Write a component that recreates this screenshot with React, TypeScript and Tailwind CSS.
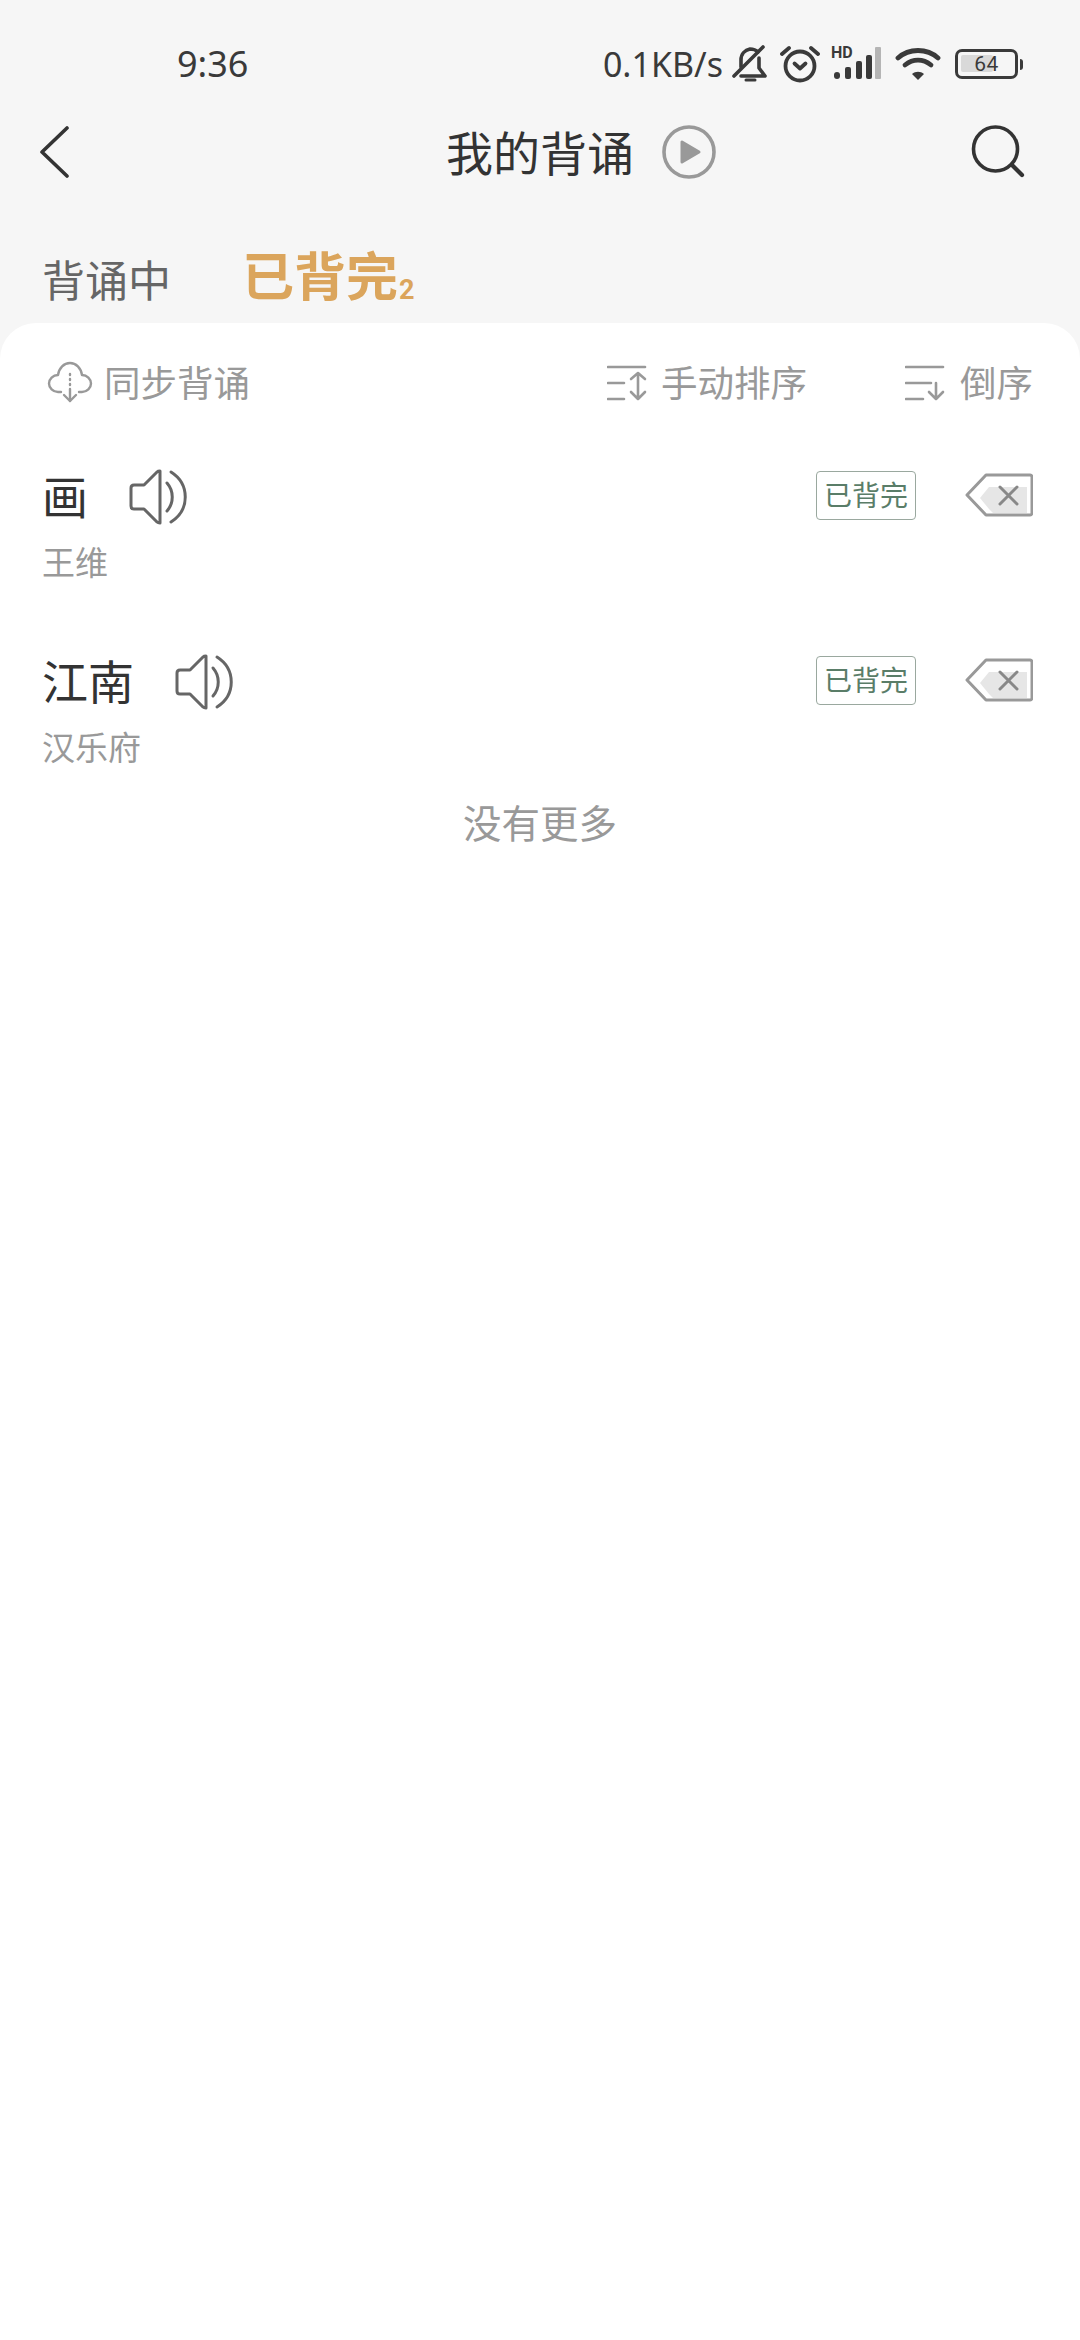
import React from "react";

const CJK = "font-['Noto_Sans_CJK_SC','Noto_Sans',sans-serif]";

function BellOff() {
  return (
    <svg width="36" height="38" viewBox="0 0 36 38" fill="none" stroke="#3a3a3a" strokeWidth="3.6" strokeLinecap="round" strokeLinejoin="round">
      <path d="M9 22V15C9 9 13 5 18 4c3 0 6 1 8 3" />
      <path d="M27 13v10l6 8H9" />
      <path d="M2 31 31 2" />
      <path d="M14 35h9" strokeWidth="3" />
    </svg>
  );
}

function Alarm() {
  return (
    <svg width="40" height="38" viewBox="0 0 40 38" fill="none" stroke="#3a3a3a" strokeWidth="3.8" strokeLinecap="round" strokeLinejoin="round">
      <circle cx="20" cy="21" r="14.500" />
      <path d="M14.500 18.500 20 23.500l5.500-5" />
      <path d="M2 9 9 3M38 9l-7-6" />
    </svg>
  );
}

function Signal() {
  return (
    <div className="relative h-[34px] w-[50px]">
      <span className="absolute left-0 top-[-2px] font-['Roboto',sans-serif] text-[16px] leading-[16px] font-bold text-[#3a3a3a]">HD</span>
      <svg className="absolute left-0 top-0" width="50" height="34" viewBox="0 0 50 34" fill="#3a3a3a">
        <rect x="3" y="25" width="6" height="7" rx="3" />
        <rect x="14" y="20" width="6" height="12" rx="2" />
        <rect x="25" y="14" width="6" height="18" rx="2" />
        <rect x="35" y="8" width="6" height="24" rx="2" />
        <rect x="44" y="0" width="6" height="32" rx="1" fill="#b5b5b5" />
      </svg>
    </div>
  );
}

function Wifi() {
  return (
    <svg width="46" height="34" viewBox="0 0 46 34" fill="none" stroke="#3a3a3a" strokeWidth="4.800" strokeLinecap="round">
      <path d="M3 11C14 1 32 1 43 11" />
      <path d="M10 18c8-6.500 18-6.500 26 0" />
      <path d="M23 33l-6-6c3.500-3 8.500-3 12 0z" fill="#3a3a3a" stroke="none" />
    </svg>
  );
}

function Battery() {
  return (
    <div className="flex items-center gap-[2px]">
      <div className="relative flex h-[30px] w-[63px] items-center justify-center rounded-[7px] border-[3.5px] border-[#3a3a3a]">
        <div className="absolute left-[3px] top-[3px] h-[17px] w-[32px] rounded-[2px] bg-[#d9d9d9]" />
        <span className="relative font-['Roboto',sans-serif] text-[21px] leading-none tracking-[0.5px] text-[#3a3a3a]">64</span>
      </div>
      <div className="h-[11px] w-[3px] rounded-r-full bg-[#3a3a3a]" />
    </div>
  );
}

function StatusBar() {
  return (
    <div className="flex h-[122px] items-center pl-[177px] pr-[57px] pt-[6px] text-[#3a3a3a]">
      <span className="font-['Noto_Sans',sans-serif] text-[36px] leading-none">9:36</span>
      <div className="ml-auto flex items-center">
        <span className="mr-[9px] font-['Noto_Sans',sans-serif] text-[34px] leading-none">0.1KB/s</span>
        <BellOff />
        <div className="ml-[12px]"><Alarm /></div>
        <div className="ml-[11px]"><Signal /></div>
        <div className="ml-[14px]"><Wifi /></div>
        <div className="ml-[14px]"><Battery /></div>
      </div>
    </div>
  );
}

function Header() {
  return (
    <div className="relative flex h-[60px] items-center justify-center">
      <svg className="absolute left-[38px] top-[4px]" width="34" height="52" viewBox="0 0 34 52" fill="none" stroke="#333" strokeWidth="3.600" strokeLinecap="round" strokeLinejoin="round">
        <path d="M29 2 4 26l25 24" />
      </svg>
      <h1 className={`${CJK} pb-[3px] text-[47px] leading-none font-normal text-[#333]`}>我的背诵</h1>
      <svg className="absolute left-[661px] top-[2px]" width="56" height="56" viewBox="0 0 56 56" fill="none">
        <circle cx="28" cy="28" r="25" stroke="#999" strokeWidth="3.600" />
        <path d="M21 18v20l17-10z" fill="#999" stroke="#999" strokeWidth="3" strokeLinejoin="round" />
      </svg>
      <svg className="absolute left-[971px] top-[2px]" width="54" height="56" viewBox="0 0 54 56" fill="none" stroke="#333" strokeWidth="3.600" strokeLinecap="round">
        <circle cx="24.500" cy="25" r="22" />
        <path d="M41 41 51 51" strokeWidth="4.200" />
      </svg>
    </div>
  );
}

function Tabs() {
  return (
    <div className={`${CJK} flex h-[141px] items-start pl-[42px] pt-[62px]`}>
      <span className="mt-[8px] text-[43px] leading-[52px] text-[#666]">背诵中</span>
      <span className="ml-[71px] text-[52px] leading-[60px] font-bold text-[#dba55c]">已背完</span>
      <span className="ml-[1px] mt-[31px] font-['Roboto',sans-serif] text-[27px] leading-[30px] font-bold text-[#dba55c]">2</span>
    </div>
  );
}

function CloudIcon() {
  return (
    <svg width="46" height="44" viewBox="0 0 46 44" fill="none" stroke="#999" strokeWidth="2.400" strokeLinecap="round" strokeLinejoin="round">
      <path d="M14 31H11C6 31 2 27 2 22.500S6 14 11 14c1-7 6-12 12-12s11 5 12 12c5 0 9 4 9 8.500S40 31 35 31h-3" />
      <path d="M23 13v1M23 18v1M23 23v1M23 28v12" />
      <path d="m17 34 6 6 6-6" />
    </svg>
  );
}

function SortIcon({ both }: { both?: boolean }) {
  return (
    <svg width="42" height="36" viewBox="0 0 42 36" fill="none" stroke="#999" strokeWidth="2.600" strokeLinecap="round" strokeLinejoin="round">
      <path d="M1 2h37" />
      {both ? (
        <>
          <path d="M1 18h16M1 34h16" />
          <path d="M31 8v26M24 14l7-6 7 6M24 27l7 7 7-7" />
        </>
      ) : (
        <>
          <path d="M1 18h25M1 34h17" />
          <path d="M31 18v16M24 27l7 7 7-7" />
        </>
      )}
    </svg>
  );
}

function Toolbar() {
  return (
    <div className={`${CJK} flex h-[120px] items-center px-[47px] text-[36.500px] leading-none text-[#999]`}>
      <CloudIcon />
      <span className="ml-[11px] pb-[2px]">同步背诵</span>
      <div className="ml-auto"><SortIcon both /></div>
      <span className="ml-[12px] pb-[2px]">手动排序</span>
      <div className="ml-[98px]"><SortIcon /></div>
      <span className="ml-[13px] pb-[2px]">倒序</span>
    </div>
  );
}

function SpeakerIcon() {
  return (
    <svg width="58" height="56" viewBox="0 0 58 56" fill="none" stroke="#666" strokeWidth="3" strokeLinecap="round" strokeLinejoin="round">
      <path d="M31 2v52c-1 0-2 0-3-1L15 40H5c-2 0-3-1-3-3V19c0-2 1-3 3-3h10L28 3c1-1 2-1 3-1z" />
      <path d="M38 14c7 8 7 20 0 28" />
      <path d="M42 3c19 12 19 38 0 50" />
    </svg>
  );
}

function DeleteIcon() {
  return (
    <svg width="68" height="44" viewBox="0 0 68 44" fill="none">
      <path d="M24 14h38v26H28l-4-4-9-11z" fill="#e6e6e6" />
      <path d="M21 2h44c1 0 2 1 2 2v36c0 1-1 2-2 2H21L2 22z" stroke="#999" strokeWidth="3" strokeLinejoin="round" />
      <path d="M35 14 52 31M52 14 35 31" stroke="#888" strokeWidth="3" strokeLinecap="round" />
    </svg>
  );
}

function PoemRow({ title, author }: { title: string; author: string }) {
  return (
    <div className={`${CJK} h-[185px] pl-[42px] pr-[47px]`}>
      <div className="flex h-[82px] items-center">
        <span className="pb-[8px] text-[46px] leading-none text-[#333]">{title}</span>
        <div className="ml-[41px] mb-[2px]"><SpeakerIcon /></div>
        <div className="ml-auto mb-[6px] flex h-[49px] w-[100px] items-center justify-center rounded-[4px] border border-[#9aa89f] pb-[2px] text-[28px] leading-none text-[#5a7d68]">已背完</div>
        <div className="ml-[49px] mb-[6px]"><DeleteIcon /></div>
      </div>
      <div className="mt-[2px] text-[33px] leading-[40px] text-[#999]">{author}</div>
    </div>
  );
}

export default function App() {
  return (
    <div className="flex h-[2340px] w-[1080px] flex-col overflow-hidden bg-[#f6f6f6]">
      <StatusBar />
      <Header />
      <Tabs />
      <div className="flex-1 rounded-t-[36px] bg-white">
        <Toolbar />
        <div className="pt-[14px]">
          <PoemRow title="画" author="王维" />
          <PoemRow title="江南" author="汉乐府" />
        </div>
        <p className={`${CJK} mt-[-31px] text-center text-[38.500px] leading-[50px] text-[#999]`}>没有更多</p>
      </div>
    </div>
  );
}
